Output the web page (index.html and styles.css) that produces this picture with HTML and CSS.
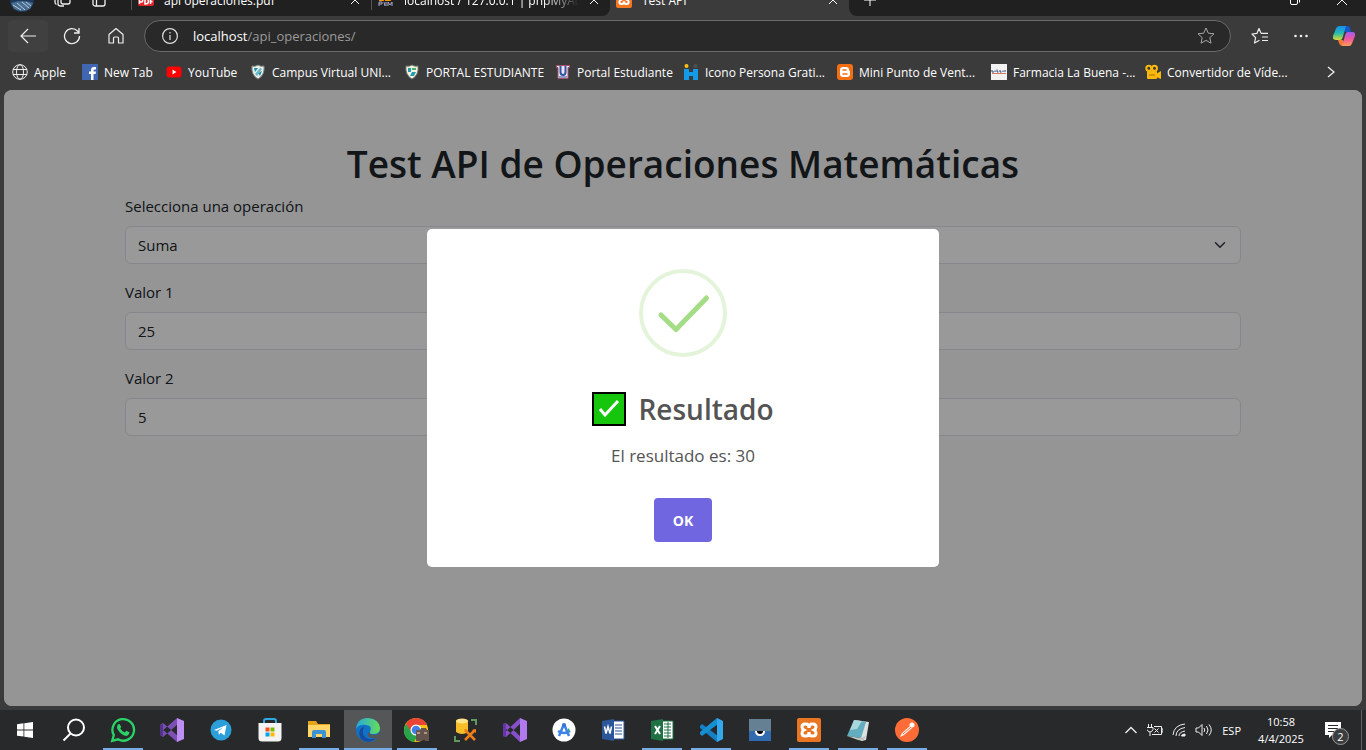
FILE: index.html
```html
<!DOCTYPE html>
<html lang="es">
<head>
<meta charset="utf-8">
<title>Test API</title>
<link rel="stylesheet" href="styles.css">
</head>
<body>
<div class="desktop">
  <header class="browser">
    <div class="tabstrip">
      <div class="tabs-before">
        <div class="strip-tools">
          <svg width="24" height="24" viewBox="0 0 24 24"><circle cx="12" cy="12" r="12" fill="#1d3a5c"/><path d="M1 15q11-4 22 0l-3 6q-8 4-16 0z" fill="#496d91"/><path d="M3 17l8 5M7 15l8 7M12 14l7 6M16 14l5 4" stroke="#b8cbdc" fill="none"/></svg>
          <svg width="18" height="14" viewBox="0 0 18 14" fill="none" stroke="#eee" stroke-width="1.300"><rect x="7" y="1" width="9" height="10" rx="2"/><path d="M4 2v9q0 2 3 2h3M1 4v5q0 2 1.500 2.500"/></svg>
          <svg width="14" height="14" viewBox="0 0 14 14" fill="none" stroke="#eee" stroke-width="1.300"><rect x="1" y="1" width="12" height="12" rx="2"/><path d="M4.500 4v9M1 4h12"/></svg>
        </div>
        <div class="tab">
          <svg class="i16" viewBox="0 0 16 16"><rect width="16" height="14" rx="2" fill="#e3242b"/><path d="M1.500 12V7H4q1.500 1.500 0 3H1.500M7 7v5q3.500 0 3.500-2.500T7 7M12.500 12V7H15M12.500 9.500h2" stroke="#fff" stroke-width="1.500" fill="none"/></svg>
          <span class="tab-title">api operaciones.pdf</span>
          <button class="tab-close" aria-label="Cerrar"><svg width="10" height="10" viewBox="0 0 10 10"><path d="M1 1l8 8M9 1l-8 8" stroke="#fff"/></svg></button>
        </div>
        <div class="tab">
          <svg class="i16" viewBox="0 0 16 16"><path d="M1 9q1-6 4-5l1 5M7 9q0-7 4-6l2 6" fill="#f89c0e"/><path d="M1 14V10h3v2H1M6 10l1 4M8 10v4M10 14v-4l2 3 2-3v4" stroke="#aaaacc" fill="none"/></svg>
          <span class="tab-title fade">localhost / 127.0.0.1 | phpMyAdmin</span>
          <button class="tab-close" aria-label="Cerrar"><svg width="10" height="10" viewBox="0 0 10 10"><path d="M1 1l8 8M9 1l-8 8" stroke="#fff"/></svg></button>
        </div>
      </div>
      <div class="tab tab-active">
        <svg class="i16" viewBox="0 0 24 24"><rect width="24" height="24" rx="3" fill="#f37623"/><path d="M8 6h1q3 0 3 4 0-4 3-4h1q3 0 3 3 0 2-2 3 2 1 2 3 0 3-3 3h-1q-3 0-3-4 0 4-3 4H8q-3 0-3-3 0-2 2-3-2-1-2-3 0-3 3-3z" fill="none" stroke="#fff" stroke-width="3"/></svg>
        <span class="tab-title">Test API</span>
        <button class="tab-close" aria-label="Cerrar"><svg width="10" height="10" viewBox="0 0 10 10"><path d="M1 1l8 8M9 1l-8 8" stroke="#fff"/></svg></button>
      </div>
      <div class="tabs-after">
        <button aria-label="Nueva pestaña"><svg width="12" height="12" viewBox="0 0 12 12"><path d="M6 0v12M0 6h12" stroke="#fff"/></svg></button>
        <div class="window-buttons">
          <button aria-label="Restaurar"><svg width="10" height="10" viewBox="0 0 10 10" fill="none" stroke="#fff"><rect x=".5" y="2.500" width="7" height="7" rx="1.500"/><path d="M2.500 .5h5q2 0 2 2v5"/></svg></button>
          <button aria-label="Cerrar ventana"><svg width="12" height="12" viewBox="0 0 12 12"><path d="M1 1l10 10M11 1L1 11" stroke="#fff"/></svg></button>
        </div>
      </div>
    </div>

    <div class="toolbar">
      <button class="tool back" aria-label="Atrás"><svg width="18" height="18" viewBox="0 0 18 18" fill="none" stroke="#eee" stroke-width="1.200"><path d="M17 9H2M9 2L2 9l7 7"/></svg></button>
      <button class="tool" aria-label="Actualizar"><svg width="18" height="18" viewBox="0 0 18 18" fill="none" stroke="#eee" stroke-width="1.300"><path d="M16.500 9A7.500 7.500 0 1 1 14.500 4L16 5.500M16 1v5h-5"/></svg></button>
      <button class="tool" aria-label="Inicio"><svg width="18" height="18" viewBox="0 0 18 18" fill="none" stroke="#eee" stroke-width="1.200" stroke-linejoin="round"><path d="M2 7.500L9 1.500l7 6V16h-4.500v-5q0-1-1-1h-3q-1 0-1 1v5H2z"/></svg></button>
      <div class="omnibox">
        <svg width="16" height="16" viewBox="0 0 16 16" fill="none" stroke="#ddd" stroke-width="1.200"><circle cx="8" cy="8" r="7.400"/><path d="M8 7v5M8 4v1.500"/></svg>
        <span class="url"><b>localhost</b>/api_operaciones/</span>
        <button aria-label="Favorito"><svg width="18" height="18" viewBox="0 0 18 18" fill="none" stroke="#a5a5a5" stroke-linejoin="round"><path d="M9 1l2.300 5.200 5.700.6-4.200 3.800 1.200 5.600L9 13.400l-5 2.800 1.200-5.600L1 6.800l5.700-.6z"/></svg></button>
      </div>
      <div class="tool-end">
        <button aria-label="Favoritos"><svg width="18" height="18" viewBox="0 0 18 18" fill="none" stroke="#eee" stroke-width="1.200" stroke-linejoin="round"><path d="M10 6.300h7M11 10h6M11 13.500h6M10 6.300L8 1.500 6 6.300l-5 .7 3.600 3.600L3.500 16l5-2.700"/></svg></button>
        <button aria-label="Más"><svg width="14" height="14" viewBox="0 0 14 14" fill="#eee"><circle cx="1.500" cy="7" r="1.300"/><circle cx="7" cy="7" r="1.300"/><circle cx="12.500" cy="7" r="1.300"/></svg></button>
        <button aria-label="Copilot"><svg width="22" height="22" viewBox="0 0 22 22"><defs><linearGradient id="cp1" x2="0" y2="1"><stop offset="0" stop-color="#168ff0"/><stop offset=".5" stop-color="#25b9b0"/><stop offset="1" stop-color="#d9dc32"/></linearGradient><linearGradient id="cp2" x2="0" y2="1"><stop offset="0" stop-color="#a35cf0"/><stop offset=".5" stop-color="#f0579e"/><stop offset="1" stop-color="#ff9b52"/></linearGradient></defs><path d="M10 1h5q1.500 0 2 2l1 4h-6z" fill="#1556d0"/><path d="M5 15h5l2 6H9q-2 0-3-3z" fill="#f07b35"/><path d="M6 1h7l-3.500 12Q9 15 7 15H3q-4 0-3-4L3 3.500Q4 1 6 1z" fill="url(#cp1)"/><path d="M16 7h3q4 0 3 4l-3 7.500q-1 2.500-3 2.500H9l3.500-12Q13 7 15 7z" fill="url(#cp2)"/></svg></button>
      </div>
    </div>

    <nav class="bookmarks">
      <a href="#"><svg class="i16" viewBox="0 0 16 16" fill="none" stroke="#eee"><circle cx="8" cy="8" r="7.300"/><ellipse cx="8" cy="8" rx="3.500" ry="7.300"/><path d="M1 5.500h14M1 10.500h14"/></svg>Apple</a>
      <a href="#"><svg class="i16" viewBox="0 0 16 16"><rect width="16" height="16" fill="#4267b2"/><path d="M9 16v-6H7V7.500h2V6q0-3 3-3h2v2.500h-1.300q-1.200 0-1.200 1.200v.8H14L13.600 10h-2.100v6z" fill="#fff"/></svg>New Tab</a>
      <a href="#"><svg class="i16" viewBox="0 0 16 16"><rect x=".5" y="2.500" width="15" height="11" rx="3" fill="#f00"/><path d="M6.500 5.500v5L10.500 8z" fill="#fff"/></svg>YouTube</a>
      <a href="#"><svg class="i16" viewBox="0 0 16 16"><path d="M2 2q3 1 6-1 3 2 6 1 1 9-6 13Q1 11 2 2z" fill="#e9efe8" stroke="#7c837c"/><path d="M4 4h4L5 8zM8 9l4-2-2 5z" fill="#1494ae"/><path d="M5 10l5-6 2 1-5 7z" fill="#6bb3c7"/></svg>Campus Virtual UNI...</a>
      <a href="#"><svg class="i16" viewBox="0 0 16 16"><path d="M2 2q3 1 6-1 3 2 6 1 1 9-6 13Q1 11 2 2z" fill="#f3f3df" stroke="#778078"/><path d="M4 4h3v4H4zM8 8h4l-2 4H6z" fill="#279bad"/><path d="M8 4h4v2H8z" fill="#4bb16e"/></svg>PORTAL ESTUDIANTE</a>
      <a href="#"><svg class="i16" viewBox="0 0 16 16"><path d="M1.500 1.500h13v2H13v11H3v-11H1.500z" fill="#eee5f1" stroke="#a75368"/><path d="M5.500 2v6q0 3 2.500 3t2.500-3V2" fill="none" stroke="#3055a5" stroke-width="2"/><path d="M4 13h8" stroke="#3055a5"/></svg>Portal Estudiante</a>
      <a href="#"><svg class="i16" viewBox="0 0 16 16"><circle cx="3.500" cy="2" r="2" fill="#ffc21b"/><circle cx="12.500" cy="2" r="2" fill="#4c5155"/><path d="M1 5h5v3h4V5h5v11h-5v-4H6v4H1z" fill="#139bea"/></svg>Icono Persona Grati...</a>
      <a href="#"><svg class="i16" viewBox="0 0 16 16"><rect width="16" height="16" rx="3" fill="#f46f14"/><path d="M6 3h3q3 0 3 3 0 1 1 1v3q0 3-3 3H6q-3 0-3-3V6q0-3 3-3z" fill="#fff"/><path d="M6 6h3M6 10h4" stroke="#f46f14" stroke-width="1.500" stroke-linecap="round"/></svg>Mini Punto de Vent...</a>
      <a href="#"><svg class="i16" viewBox="0 0 16 16"><rect width="16" height="16" fill="#f2f2f2"/><path d="M1 6v2h2M4 8V6.500M6 5.500V8h1.500M9 6v2h1.500M12 8V6.500M14 6v2" stroke="#31477a" fill="none"/><path d="M1 9.500h14" stroke="#d8795c"/></svg>Farmacia La Buena -...</a>
      <a href="#"><svg class="i16" viewBox="0 0 16 16" fill="#fbb80c"><circle cx="3.800" cy="4.200" r="2.500" fill="none" stroke="#fbb80c" stroke-width="2"/><circle cx="9.500" cy="4.200" r="2.500" fill="none" stroke="#fbb80c" stroke-width="2"/><rect x="2" y="7" width="10" height="8" rx="1"/><path d="M11 10l5-3v8l-5-2z"/><path d="M4 11h6" stroke="#a76a09"/></svg>Convertidor de Víde...</a>
      <button class="more" aria-label="Más favoritos"><svg width="8" height="12" viewBox="0 0 8 12"><path d="M1 1l6 5-6 5" fill="none" stroke="#eee" stroke-width="1.300"/></svg></button>
    </nav>
  </header>

  <main class="page">
    <div class="container">
      <h1>Test API de Operaciones Matemáticas</h1>
      <form>
        <div class="field">
          <label for="op">Selecciona una operación</label>
          <select id="op"><option>Suma</option><option>Resta</option></select>
        </div>
        <div class="field">
          <label for="v1">Valor 1</label>
          <input id="v1" type="text" value="25">
        </div>
        <div class="field">
          <label for="v2">Valor 2</label>
          <input id="v2" type="text" value="5">
        </div>
      </form>
    </div>
    <div class="backdrop">
      <section class="modal" role="dialog" aria-labelledby="modal-title">
        <svg class="success" width="88" height="88" viewBox="0 0 88 88" fill="none"><circle cx="44" cy="44" r="42" stroke="#e4f4da" stroke-width="4"/><path d="M22 46l15 14.500L67.500 29" stroke="#a5dc86" stroke-width="5" stroke-linecap="round" stroke-linejoin="round"/></svg>
        <h2 id="modal-title">
          <svg width="34" height="34" viewBox="0 0 34 34"><rect x="1" y="1" width="32" height="32" fill="#16c60c" stroke="#000" stroke-width="2"/><path d="M8 17l5 6L26 9" fill="none" stroke="#fff" stroke-width="3"/></svg>
          <span>Resultado</span>
        </h2>
        <p>El resultado es: 30</p>
        <button class="ok">OK</button>
      </section>
    </div>
  </main>

  <footer class="taskbar">
    <div class="apps">
      <button aria-label="Inicio de Windows"><svg width="16" height="16" viewBox="0 0 16 16" fill="#fff"><path d="M0 2.200l6.500-.9v6.200H0zM7.300 1.200L16 0v7.500H7.300zM0 8.400h6.500v6.200L0 13.700zM7.300 8.400H16V16l-8.700-1.200z"/></svg></button>
      <button aria-label="Buscar"><svg width="24" height="24" viewBox="0 0 24 24" fill="none" stroke="#fff" stroke-width="2"><circle cx="14" cy="9.500" r="8"/><path d="M8.500 15.500L1.500 22.500"/></svg></button>
      <button class="open" aria-label="WhatsApp"><svg width="26" height="26" viewBox="0 0 26 26"><path d="M2.200 23.800l1.600-5.700a10.800 10.800 0 1 1 4.200 4.200z" fill="none" stroke="#2ad366" stroke-width="2.300"/><path d="M9.500 7q-1-.4-2 1-1.300 2.500.7 5.200 2.800 4.400 7 5.600 3 .5 4-2.300l.2-1.200-3.100-1.500-1.500 1.700q-3-1-4.600-4.200l1.100-1.400z" fill="#2ad366"/></svg></button>
      <button aria-label="Visual Studio"><svg width="24" height="24" viewBox="0 0 24 24"><path d="M0 7l3-2 15 13-1 6L1 10zM0 17l3 2L18 6l-1-6L1 14z" fill="#7c4fb5"/><path d="M0 7l3-1v12l-3-1z" fill="#52338a"/><path d="M17 0l7 3v18l-7 3z" fill="#bd8ff2"/></svg></button>
      <button aria-label="Telegram"><svg width="22" height="22" viewBox="0 0 22 22"><circle cx="11" cy="11" r="10.500" fill="#2b9fd9"/><path d="M4 11l12.500-5-2 10.500-3.700-2.700-2 2-.5-3.500 5-4-6.500 3.500z" fill="#fff"/></svg></button>
      <button aria-label="Microsoft Store"><svg width="24" height="24" viewBox="0 0 24 24"><path d="M6 7V3q0-2 2-2h8q2 0 2 2v4" fill="none" stroke="#30a9e2" stroke-width="2"/><path d="M.5 5h23v15q0 3.500-3.500 3.500H4Q.5 23.500.5 20z" fill="#f3f3f3"/><path d="M7.500 9.500h4v4h-4z" fill="#f25022"/><path d="M12.500 9.500h4v4h-4z" fill="#7fba00"/><path d="M7.500 14.500h4v4h-4z" fill="#00a4ef"/><path d="M12.500 14.500h4v4h-4z" fill="#ffb900"/></svg></button>
      <button class="open" aria-label="Explorador"><svg width="22" height="20" viewBox="0 0 22 20"><path d="M0 1h8l2 3h12v6H0z" fill="#e5a51a"/><path d="M0 5h22v12H0z" fill="#ffd667"/><path d="M4 18v-6q0-2 2-2h10q2 0 2 2v6h-4v-4H8v4z" fill="#3c92d2"/></svg></button>
      <button class="open current" aria-label="Edge"><svg width="24" height="24" viewBox="0 0 24 24"><defs><linearGradient id="eg"><stop offset="0" stop-color="#25a7dd"/><stop offset="1" stop-color="#66df58"/></linearGradient></defs><circle cx="12" cy="12" r="12" fill="#1271c6"/><path d="M0 11Q1 0 12 0q11 1 12 10 0 6-7 6-4 0-3-2 3-6-4-7Q3 6 0 11z" fill="url(#eg)"/><path d="M9 8q-4 4-1 10 4 5 12 2-7 7-15 1Q0 12 9 8z" fill="#164c9c"/><path d="M14 14q-1 3 4 3 4 0 6-3v5l-3 1q-5 1-8-1-3-3 1-5z" fill="#555658"/></svg></button>
      <button class="open" aria-label="Chrome"><svg width="26" height="24" viewBox="0 0 26 24"><circle cx="12" cy="12" r="12" fill="#fbc116"/><path d="M2 6Q5 0 12 0q8 0 11 7H12L7 15z" fill="#e94435"/><path d="M2 6l6 9q2 3 6 2l-4 7Q0 22 0 12 0 9 2 6z" fill="#26a34b"/><circle cx="12" cy="12" r="5.500" fill="#fff"/><circle cx="12" cy="12" r="4.300" fill="#3f7fe8"/><path d="M12 12h4l1-2h5l1 2h2v11h-4l-1-2-2 2h-6z" fill="#65534e"/><path d="M13 15h3M20 15h3" stroke="#b19483" stroke-width="2"/></svg></button>
      <button aria-label="SQL Server Tools"><svg width="24" height="24" viewBox="0 0 24 24"><path d="M2 3q6-4 12 0v11q-6 4-12 0z" fill="#f5bd28"/><ellipse cx="8" cy="3" rx="6" ry="2.500" fill="#ffe58a"/><path d="M17 2h5v5M1 18v5h5" fill="none" stroke="#5c9a5e" stroke-width="2"/><path d="M11 12l10 10M21 12L11 22" stroke="#ef7d18" stroke-width="2.500"/><path d="M10 11l4 1-2 2zM18 12l4-1v4z" fill="#ef7d18"/></svg></button>
      <button aria-label="Visual Studio 2022"><svg width="24" height="24" viewBox="0 0 24 24"><path d="M0 6l3-1 15 14-1 5L1 9zM0 18l3 1L18 5l-1-5L1 15z" fill="#8650c7"/><path d="M0 6l3-1v14l-3-1z" fill="#6635a6"/><path d="M17 0l7 3v18l-7 3z" fill="#b079ed"/></svg></button>
      <button aria-label="Android Studio"><svg width="24" height="24" viewBox="0 0 24 24"><circle cx="12" cy="12" r="11.500" fill="#fff"/><path d="M12 6L7 18M12 6l5 12M6 13q6 4 12 0" fill="none" stroke="#3c82e8" stroke-width="2.500"/><circle cx="12" cy="7" r="2" fill="#3a75d4"/><path d="M16 10l2 2-2 2z" fill="#39ab65"/></svg></button>
      <button aria-label="Word"><svg width="24" height="22" viewBox="0 0 24 22"><path d="M12 2h11v18H12z" fill="#fff" stroke="#2b579a"/><path d="M14 6h7M14 9h7M14 12h7M14 15h7" stroke="#2b579a"/><path d="M1 2l12-2v22L1 20z" fill="#2b579a"/><path d="M3.500 7.500l1.500 7 2-7 2 7 1.500-7" stroke="#fff" stroke-width="1.500" fill="none"/></svg></button>
      <button class="open" aria-label="Excel"><svg width="24" height="22" viewBox="0 0 24 22"><path d="M12 2h11v18H12z" fill="#fff" stroke="#207245"/><path d="M14 5h7M14 8h7M14 11h7M14 14h7M14 17h7M18 3v16" stroke="#207245"/><path d="M1 2l12-2v22L1 20z" fill="#207245"/><path d="M5 7l5 8M10 7l-5 8" stroke="#fff" stroke-width="2"/></svg></button>
      <button class="open" aria-label="VS Code"><svg width="24" height="24" viewBox="0 0 24 24"><path d="M1 8l2-2 16 12-1 6L1 10z" fill="#1480c5"/><path d="M1 16l2 2L19 6l-1-6L1 14z" fill="#168fd2"/><path d="M18 0l6 3v18l-6 3z" fill="#34a8ed"/></svg></button>
      <button aria-label="Aplicación"><svg width="22" height="22" viewBox="0 0 22 22"><path d="M0 0h22v12H0z" fill="#657f93"/><path d="M0 12h22v10H0z" fill="#326aae"/><path d="M6 12h10q0 5-5 5t-5-5z" fill="#fff"/><path d="M8 12h6q0 3-3 3t-3-3z" fill="#000"/></svg></button>
      <button class="open" aria-label="XAMPP"><svg width="24" height="24" viewBox="0 0 24 24"><rect width="24" height="24" rx="2" fill="#e97523"/><path d="M8 6h1q3 0 3 4 0-4 3-4h1q3 0 3 3 0 2-2 3 2 1 2 3 0 3-3 3h-1q-3 0-3-4 0 4-3 4H8q-3 0-3-3 0-2 2-3-2-1-2-3 0-3 3-3z" fill="none" stroke="#fff" stroke-width="3"/></svg></button>
      <button class="open" aria-label="Bloc de notas"><svg width="24" height="24" viewBox="0 0 24 24"><path d="M8 2l15 2-3 18-5 1z" fill="#dbe1df"/><path d="M8 2l12 2-5 16L1 18z" fill="#63adc0"/><path d="M8 2l8 1-5 8-7 1z" fill="#a9d8df"/><path d="M1 18l14 2 5-2-3 5-5-1z" fill="#bfc4bf"/></svg></button>
      <button class="open" aria-label="Postman"><svg width="24" height="24" viewBox="0 0 24 24"><circle cx="12" cy="12" r="12" fill="#ff6c37"/><path d="M5 19l2-4 8-7 2 2-8 7z" fill="#fff"/><circle cx="17" cy="7" r="2.500" fill="#fff"/><path d="M8 16l8-7" stroke="#ff6c37"/></svg></button>
    </div>
    <div class="tray">
      <svg width="14" height="8" viewBox="0 0 14 8" fill="none" stroke="#eee" stroke-width="1.300"><path d="M1.500 7L7 1.500 12.500 7"/></svg>
      <svg width="16" height="12" viewBox="0 0 16 12" fill="none" stroke="#eee"><path d="M1.500 0v3M4.500 0v3M0 3.500h6v2Q5 8 3 8T0 5.500M3 8v4M7 2.500h7.500v8H5M14.500 5H16v3h-1.500M7.500 4.500l4 4M11.500 4.500l-4 4"/></svg>
      <svg width="14" height="14" viewBox="0 0 14 14" fill="none" stroke="#eee"><path d="M1 12Q2 2 13 1M4 13Q4 6 13 4.500M7 13Q7 9 13 8" /><path d="M9.500 13q0-2 3.500-2v2z" fill="#eee"/></svg>
      <svg width="18" height="14" viewBox="0 0 18 14" fill="none" stroke="#eee"><path d="M1 5h2.500L7 1.500v11L3.500 9H1zM9 5q1.500 2 0 4M11.500 3q3 4 0 8M14 1.500q4.500 5.500 0 11"/></svg>
      <span class="lang">ESP</span>
      <span class="clock"><span>10:58</span><span>4/4/2025</span></span>
      <span class="notice">
        <svg width="16" height="16" viewBox="0 0 16 16"><path d="M0 0h16v13H7l-3 3v-3H0z" fill="#fff"/><path d="M3 3.500h10M3 6.500h10M3 9.500h6" stroke="#28292b"/></svg>
        <span class="count">2</span>
      </span>
    </div>
  </footer>
</div>
</body>
</html>
```
FILE: styles.css
```css
* { box-sizing: border-box; }
body { margin: 0; font-family: "Open Sans", "Noto Sans", sans-serif; }
button { padding: 0; border: 0; background: none; color: inherit; font: inherit; display: flex; align-items: center; justify-content: center; }
svg { display: block; flex: none; }
.i16 { width: 16px; height: 16px; }
.desktop { height: 100vh; display: flex; flex-direction: column; background: #3b3b3b; color: #fff; overflow: hidden; }

.tabstrip { display: grid; grid-template-columns: 610px 239px 1fr; height: 16px; overflow: hidden; align-content: end; font-size: 12px; }
.tabs-before, .tabs-after, .tab-active { height: 32px; display: flex; align-items: center; }
.tabs-before { background: #202020; border-bottom-right-radius: 8px; display: grid; grid-template-columns: 131px 240px 239px; }
.tabs-after { background: #202020; border-bottom-left-radius: 8px; justify-content: space-between; padding: 0 18px 0 15px; }
.strip-tools { display: flex; align-items: center; gap: 20px; padding-left: 10px; }
.tab { display: flex; align-items: center; gap: 10px; height: 32px; padding: 0 11px 0 6px; }
.tabs-before .tab { height: 20px; border-left: 1px solid #555; }
.tab-title { flex: 1; min-width: 0; white-space: nowrap; overflow: hidden; }
.fade { mask-image: linear-gradient(to right, #000 80%, transparent); }
.window-buttons { display: flex; gap: 36px; }

.toolbar { height: 40px; display: flex; align-items: center; padding: 0 11px 0 8px; }
.tool { width: 44px; height: 32px; }
.back { width: 40px; margin-right: 2px; background: #404040; border-radius: 4px; }
.omnibox { flex: 1; height: 32px; margin-left: 6px; padding: 0 15px 0 17px; display: flex; align-items: center; gap: 15px; border: 1px solid #696969; border-radius: 16px; background: #292929; }
.url { flex: 1; font-size: 13px; color: #9b9b9b; }
.url b { font-weight: 400; color: #fff; }
.tool-end { display: flex; align-items: center; gap: 25px; padding-left: 20px; }

.bookmarks { height: 34px; display: grid; grid-template-columns: 70px 84px 84px 154px 151px 128px 154px 154px 154px 154px 1fr; align-items: center; padding: 0 31px 2px 12px; }
.bookmarks a { display: flex; align-items: center; gap: 6px; color: #fff; font-size: 12px; text-decoration: none; white-space: nowrap; }
.more { justify-self: end; }

.page { position: relative; flex: 1; margin: 0 4px 4px; border-radius: 8px; overflow: hidden; background: #f8f9fa; color: #212529; }
.container { max-width: 1140px; margin: 0 auto; padding: 50px 12px 0; }
h1 { margin: 0 0 6px; font-size: 37px; line-height: 48px; font-weight: 600; text-align: center; }
.field { margin-bottom: 16px; }
label { display: block; margin-bottom: 8px; font-size: 15px; line-height: 24px; }
input, select { display: block; width: 100%; height: 38px; padding: 0 12px; border: 1px solid #dee2e6; border-radius: 6px; background: #fff; color: #212529; font: 15px "Open Sans", sans-serif; }
select { appearance: none; background: #fff url("data:image/svg+xml,%3Csvg xmlns='http://www.w3.org/2000/svg' viewBox='0 0 16 16'%3E%3Cpath fill='none' stroke='%23343a40' stroke-linecap='round' stroke-linejoin='round' stroke-width='2' d='m2 5 6 6 6-6'/%3E%3C/svg%3E") no-repeat right 14px center / 12px 12px; }
.backdrop { position: absolute; inset: 0; display: flex; align-items: center; justify-content: center; background: rgba(0, 0, 0, .4); }
.modal { width: 512px; padding: 40px 20px 25px; display: flex; flex-direction: column; align-items: center; border-radius: 5px; background: #fff; color: #545454; }
h2 { display: flex; align-items: center; gap: 12px; margin: 32px 0 0; font-size: 28px; line-height: 40px; font-weight: 600; }
.modal p { margin: 14px 0 29px; font-size: 17px; line-height: 26px; }
.ok { width: 58px; height: 44px; border-radius: 4px; background: #7066e0; color: #fff; font-size: 14px; font-weight: 700; }

.taskbar { height: 40px; display: flex; justify-content: space-between; background: #28292b; }
.apps { display: flex; gap: 1px; padding-left: 1px; }
.apps button { position: relative; width: 48px; height: 40px; }
.current { background: #555658; }
.open::after { content: ""; position: absolute; bottom: 0; left: 4px; right: 4px; height: 2px; background: #76aee5; }
.current::after { left: 0; right: 0; }
.tray { display: flex; align-items: center; gap: 9px; margin-right: 4px; padding-right: 14px; border-right: 1px solid #606163; font-size: 12px; }
.clock { display: flex; flex-direction: column; align-items: center; width: 62px; line-height: 17px; font-size: 11px; }
.lang { font-size: 11px; }
.notice { position: relative; margin-left: 4px; width: 22px; }
.count { position: absolute; left: 7px; top: 6px; width: 17px; height: 17px; border: 1px solid #999; border-radius: 50%; background: #3c3d3f; font-size: 11px; line-height: 15px; text-align: center; }
```
